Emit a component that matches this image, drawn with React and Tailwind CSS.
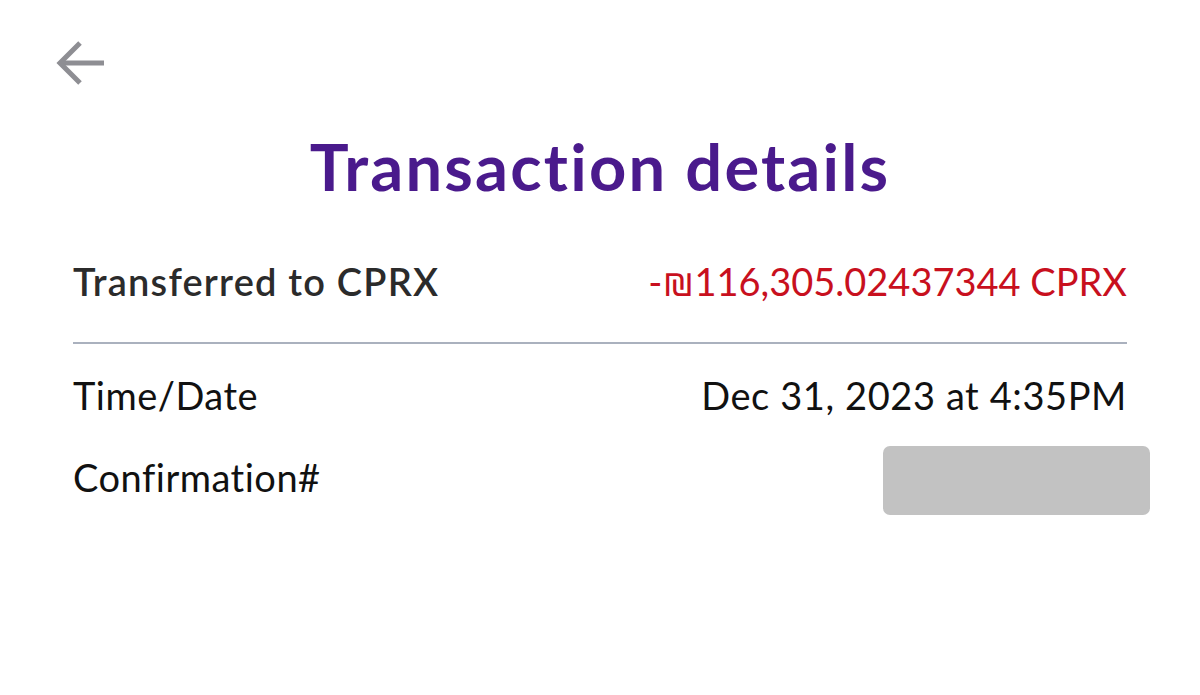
import React from 'react';

export default function App() {
  return (
    <div className="w-[1200px] h-[695px] bg-white font-['Lato',sans-serif] overflow-hidden">
      <div className="pt-[40px] pl-[56px]">
        <button className="block w-[50px] h-[46px]">
          <svg width="50" height="46" viewBox="0 0 50 46" fill="none" stroke="#8e8e93" strokeWidth="5">
            <path d="M48 23H5" />
            <path d="M24 3L4 23l20 20" />
          </svg>
        </button>
      </div>
      <h1 className="mt-[40px] text-center text-[65px] leading-[80px] font-bold tracking-[2.2px] [font-variant-ligatures:none] text-[#4a1a8c]">
        Transaction details
      </h1>
      <div className="mx-[73px] mt-[50px]">
        <div className="flex justify-between items-baseline pb-[36px] border-b-2 border-[#aab1be] text-[38px] leading-[50px]">
          <span className="font-semibold tracking-[1.2px] text-[#2b2b2b]">Transferred to CPRX</span>
          <span className="text-[#c8101e]">-₪116,305.02437344 CPRX</span>
        </div>
        <div className="flex justify-between items-baseline mt-[26px] text-[38px] leading-[50px] text-[#111]">
          <span className="tracking-[0.5px]">Time/Date</span>
          <span className="tracking-[0.6px]">Dec 31, 2023 at 4:35PM</span>
        </div>
        <div className="flex justify-between items-start mt-[26px] mr-[-23px]">
          <span className="text-[38px] leading-[50px] tracking-[0.5px] text-[#111] mt-[6px]">Confirmation#</span>
          <div className="w-[267px] h-[69px] rounded-[7px] bg-[#c2c2c2]" />
        </div>
      </div>
    </div>
  );
}
